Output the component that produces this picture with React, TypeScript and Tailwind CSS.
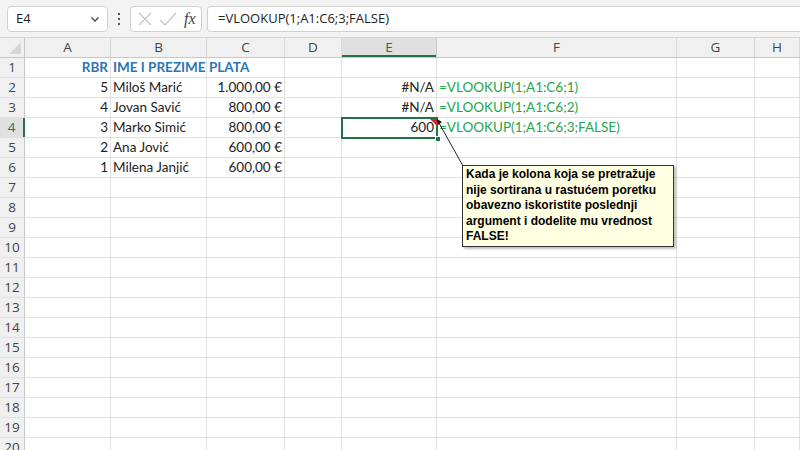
import React from "react";

const cols = [
  { key: "A", w: "w-[86px]" },
  { key: "B", w: "w-[96px]" },
  { key: "C", w: "w-[78px]" },
  { key: "D", w: "w-[57px]" },
  { key: "E", w: "w-[95px]" },
  { key: "F", w: "w-[240px]" },
  { key: "G", w: "w-[78px]" },
  { key: "H", w: "flex-1" },
];

type Cell = { t: string; align?: "r" | "l"; cls?: string };
const data: Record<number, Record<string, Cell>> = {
  1: {
    A: { t: "RBR", align: "r", cls: "font-bold text-[#2e75b6]" },
    B: { t: "IME I PREZIME", cls: "font-bold text-[#2e75b6]" },
    C: { t: "PLATA", cls: "font-bold text-[#2e75b6]" },
  },
  2: {
    A: { t: "5", align: "r" },
    B: { t: "Miloš Marić" },
    C: { t: "1.000,00 €", align: "r" },
    E: { t: "#N/A", align: "r" },
    F: { t: "=VLOOKUP(1;A1:C6;1)", cls: "text-[#24a650]" },
  },
  3: {
    A: { t: "4", align: "r" },
    B: { t: "Jovan Savić" },
    C: { t: "800,00 €", align: "r" },
    E: { t: "#N/A", align: "r" },
    F: { t: "=VLOOKUP(1;A1:C6;2)", cls: "text-[#24a650]" },
  },
  4: {
    A: { t: "3", align: "r" },
    B: { t: "Marko Simić" },
    C: { t: "800,00 €", align: "r" },
    E: { t: "600", align: "r" },
    F: { t: "=VLOOKUP(1;A1:C6;3;FALSE)", cls: "text-[#24a650]" },
  },
  5: {
    A: { t: "2", align: "r" },
    B: { t: "Ana Jović" },
    C: { t: "600,00 €", align: "r" },
  },
  6: {
    A: { t: "1", align: "r" },
    B: { t: "Milena Janjić" },
    C: { t: "600,00 €", align: "r" },
  },
};

const rows = Array.from({ length: 20 }, (_, i) => i + 1);
const font = { fontFamily: "Lato, 'Open Sans', sans-serif" };

export default function App() {
  return (
    <div className="relative w-[800px] h-[450px] overflow-hidden bg-white text-[#222]" style={font}>
      {/* Top formula bar */}
      <div className="h-[38px] bg-[#f3f3f3] flex items-center border-b border-[#d5d5d5]">
        <div className="ml-[7px] w-[101px] h-[26px] bg-white border border-[#d0d0d0] rounded-[4px] flex items-center justify-between pl-[8px] pr-[6px]">
          <span className="text-[13px] text-[#222]" style={{ fontFamily: "'Open Sans', sans-serif" }}>E4</span>
          <svg width="12" height="12" viewBox="0 0 12 12">
            <path d="M2.5 4.5 L6 8 L9.5 4.5" fill="none" stroke="#444" strokeWidth="1.3" />
          </svg>
        </div>
        <div className="w-[22px] flex flex-col items-center justify-center gap-[3px]">
          <div className="w-[2px] h-[2px] bg-[#555]" />
          <div className="w-[2px] h-[2px] bg-[#555]" />
          <div className="w-[2px] h-[2px] bg-[#555]" />
        </div>
        <div className="w-[72px] h-[26px] bg-white border border-[#d0d0d0] rounded-[4px] flex items-center pl-[5px]">
          <svg width="16" height="16" viewBox="0 0 16 16" className="ml-[1px]">
            <path d="M2 2 L14 14 M14 2 L2 14" stroke="#c4c4c4" strokeWidth="1.2" />
          </svg>
          <svg width="18" height="16" viewBox="0 0 18 16" className="ml-[6px]">
            <path d="M1 9 L6 14 L17 2" fill="none" stroke="#c4c4c4" strokeWidth="1.2" />
          </svg>
          <span className="ml-[7px] text-[16px] italic text-[#444]" style={{ fontFamily: "'Liberation Serif', serif" }}>fx</span>
        </div>
        <div className="ml-[5px] flex-1 h-[26px] bg-white border border-[#d0d0d0] border-r-0 rounded-l-[4px] flex items-center pl-[10px]">
          <span className="text-[13px] text-[#222]" style={{ fontFamily: "'Open Sans', sans-serif" }}>=VLOOKUP(1;A1:C6;3;FALSE)</span>
        </div>
      </div>

      {/* Column headers */}
      <div className="flex h-[20px] bg-[#f0f0f0] border-b border-[#c8c8c8]">
        <div className="w-[25px] border-r border-[#c8c8c8] relative">
          <svg width="12" height="12" viewBox="0 0 12 12" className="absolute right-[3px] bottom-[3px]">
            <path d="M12 0 L12 12 L0 12 Z" fill="#d6d6d6" />
          </svg>
        </div>
        {cols.map((c) => (
          <div
            key={c.key}
            className={
              c.key === "E"
                ? `${c.w} bg-[#e0e0e0] border-r border-[#c8c8c8] flex items-center justify-center text-[13.5px] text-[#217346] shadow-[inset_0_-2px_0_#217346]`
                : `${c.w} border-r border-[#d9d9d9] flex items-center justify-center text-[13.5px] text-[#444]`
            }
            style={{ fontFamily: "'Open Sans', sans-serif" }}
          >
            {c.key}
          </div>
        ))}
      </div>

      {/* Rows */}
      {rows.map((r) => (
        <div key={r} className="flex h-[20px] border-b border-[#e1e1e1]">
          <div
            className={
              r === 4
                ? "w-[25px] bg-[#e0e0e0] border-r-2 border-[#217346] flex items-center justify-center text-[13.5px] text-[#217346]"
                : "w-[25px] bg-[#f0f0f0] border-r border-[#c8c8c8] flex items-center justify-center text-[13.5px] text-[#444]"
            }
            style={{ fontFamily: "'Open Sans', sans-serif" }}
          >
            {r}
          </div>
          {cols.map((c) => {
            const cell = data[r]?.[c.key];
            return (
              <div
                key={c.key}
                className={`${c.w} border-r border-[#e1e1e1] flex items-center ${
                  cell?.align === "r" ? "justify-end pr-[2px]" : "pl-[2px]"
                } text-[13.5px] whitespace-nowrap overflow-visible`}
              >
                {cell && <span className={cell.cls ?? "text-[#222]"}>{cell.t}</span>}
              </div>
            );
          })}
        </div>
      ))}

      {/* Selection of E4 */}
      <div className="absolute left-[341px] top-[117px] w-[97px] h-[22px] border-2 border-[#217346]" />
      <div className="absolute left-[435px] top-[136px] w-[6px] h-[6px] bg-[#217346] border border-white" />
      {/* comment indicator */}
      <svg className="absolute left-[430px] top-[119px]" width="7" height="7" viewBox="0 0 7 7">
        <path d="M0 0 L7 0 L7 7 Z" fill="#e02020" />
      </svg>

      {/* Comment arrow */}
      <svg className="absolute left-0 top-0" width="800" height="450" viewBox="0 0 800 450" style={{ pointerEvents: "none" }}>
        <line x1="439" y1="123" x2="463" y2="166" stroke="#222" strokeWidth="1" />
        <path d="M437 119 L442 122 L438 125 Z" fill="#111" />
      </svg>

      {/* Comment box */}
      <div className="absolute left-[462px] top-[165px] w-[212px] h-[82px] bg-[#ffffe1] border border-[#333] shadow-[2px_2px_2px_rgba(0,0,0,0.25)] px-[3px] pt-[1px]">
        <p
          className="text-[12px] font-bold leading-[15.5px] text-black"
          style={{ fontFamily: "'Liberation Sans', Arial, sans-serif" }}
        >
          Kada je kolona koja se pretražuje nije sortirana u rastućem poretku obavezno iskoristite poslednji argument i dodelite mu vrednost FALSE!
        </p>
      </div>
    </div>
  );
}
